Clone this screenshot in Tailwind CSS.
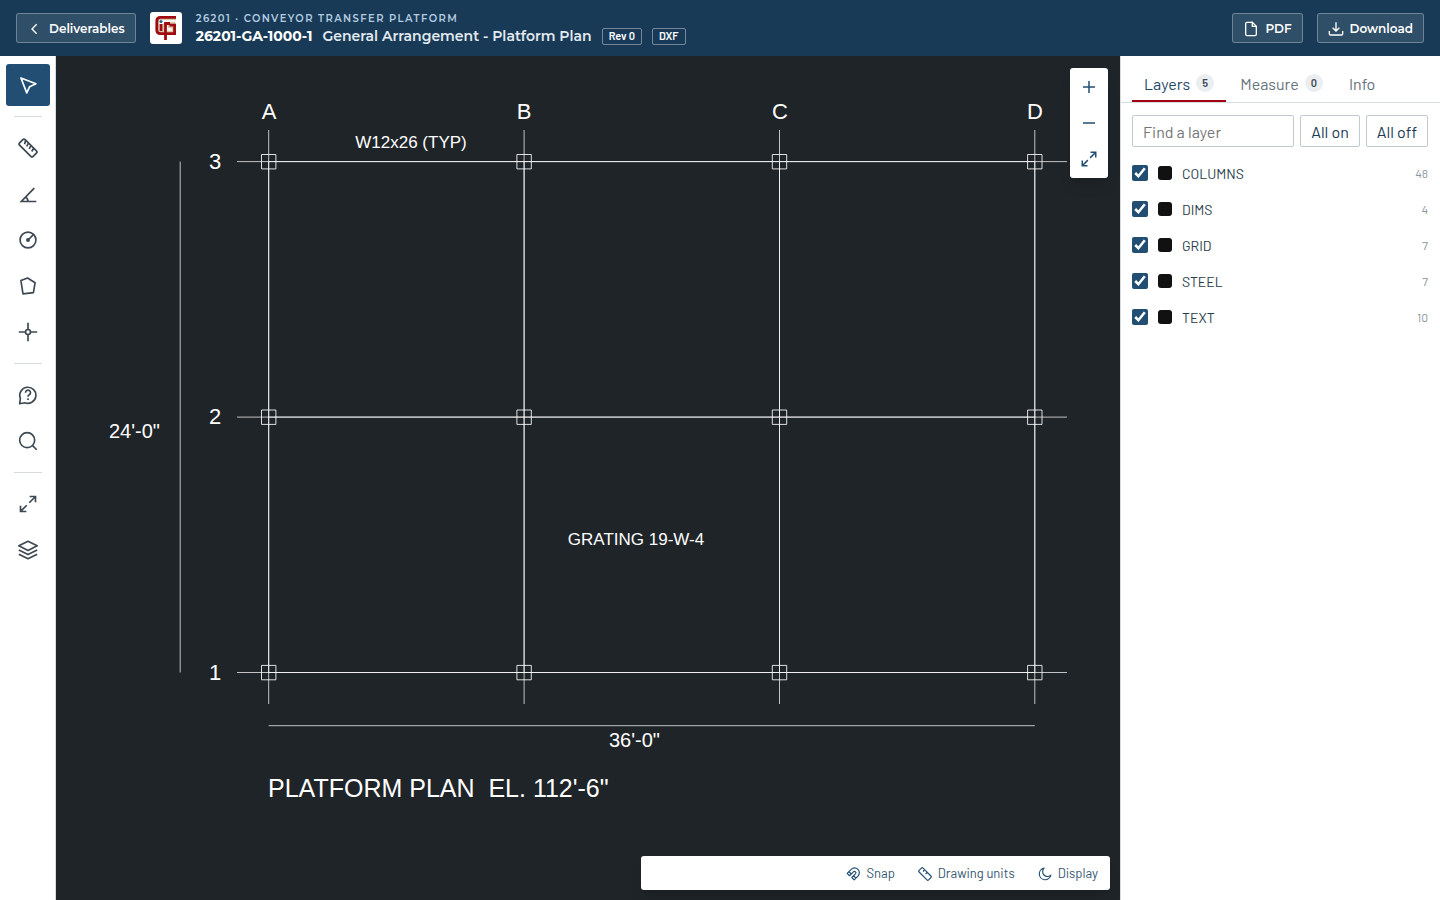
<!DOCTYPE html>
<html lang="en">
<head>
<meta charset="utf-8">
<meta name="viewport" content="width=device-width, initial-scale=1">
<title>26201-GA-1000-1 General Arrangement - Platform Plan</title>
<script src="https://cdn.jsdelivr.net/npm/@tailwindcss/browser@4"></script>
</head>
<body class="flex h-screen flex-col overflow-hidden bg-white font-['Barlow','Roboto',sans-serif] text-[#1a3a55]">
<svg class="hidden" aria-hidden="true">
  <symbol id="expand" viewBox="0 0 24 24"><path d="M14 3h7v7M21 3l-7.500 7.500M10 21H3v-7M3 21l7.500-7.500"/></symbol>
</svg>

<header class="flex h-14 shrink-0 items-center gap-3.5 bg-[#183a56] px-4 font-['Montserrat','Inter',sans-serif] text-white">
  <a href="#" class="flex h-[30px] items-center gap-1.5 rounded-[3px] border border-white/30 bg-white/10 px-2.5 pt-px text-[12px] font-semibold">
    <svg class="size-4 fill-none stroke-current stroke-2" viewBox="0 0 24 24"><path d="m14.500 5-7 7 7 7"/></svg>
    Deliverables
  </a>
  <svg class="size-8 shrink-0" viewBox="0 0 32 32" role="img" aria-label="Company logo">
    <rect width="32" height="32" rx="3" fill="#fff"/>
    <path d="M26 7H10Q8 7 8 9.500V18Q8 20 10 20H23V15H19V11H25.500M13 12V19" fill="none" stroke="#d6c9ac" stroke-width="2.500"/>
    <path d="M26 5.300H10.500Q6.800 5.300 6.800 9V18.200Q6.800 21.600 10.500 21.600H24.600V13.200H19.500M11 12V19M15.500 28V11.500H20" fill="none" stroke="#a00a10" stroke-width="2.800"/>
    <circle cx="11" cy="9.500" r="1.500" fill="#1f5d91"/>
  </svg>
  <div class="min-w-0 flex-1 pt-0.5">
    <div class="text-[10px] leading-[14px] font-semibold tracking-[0.14em] text-[#b3cbe0]">26201 · CONVEYOR TRANSFER PLATFORM</div>
    <div class="flex items-center gap-2.5 leading-5 whitespace-nowrap">
      <span class="text-[14px] font-bold">26201-GA-1000-1</span>
      <h1 class="text-[14px] font-semibold text-[#e3eaf0]">General Arrangement - Platform Plan</h1>
      <span class="flex h-[17px] items-center rounded-[2px] border border-white/40 px-1.5 font-['Barlow','Roboto',sans-serif] text-[11px] font-semibold">Rev 0</span>
      <span class="flex h-[17px] items-center rounded-[2px] border border-white/40 px-1.5 font-['Barlow','Roboto',sans-serif] text-[11px] font-semibold">DXF</span>
    </div>
  </div>
  <button class="flex h-[30px] items-center gap-1.5 rounded-[3px] border border-white/30 bg-white/10 px-2.5 pt-px text-[12px] font-semibold">
    <svg class="size-4 fill-none stroke-current stroke-2" viewBox="0 0 24 24"><path d="M14 2H6a2 2 0 0 0-2 2v16a2 2 0 0 0 2 2h12a2 2 0 0 0 2-2V8l-6-6v6h6"/></svg>
    PDF
  </button>
  <button class="flex h-[30px] items-center gap-1.5 rounded-[3px] border border-white/30 bg-white/10 px-2.5 pt-px text-[12px] font-semibold">
    <svg class="size-4 fill-none stroke-current stroke-2" viewBox="0 0 24 24"><path d="M12 2v13m-5-5 5 5 5-5M2 15v4a2 2 0 0 0 2 2h16a2 2 0 0 0 2-2v-4"/></svg>
    Download
  </button>
</header>

<div class="flex min-h-0 flex-1">
  <nav aria-label="Tools" class="flex w-14 shrink-0 flex-col items-center gap-1 border-r border-[#d5dce2] bg-white py-2 text-[#3d4852]">
    <button aria-label="Select" class="grid h-[42px] w-11 place-items-center rounded-[3px] bg-[#214e72] text-white"><svg class="size-5 fill-none stroke-current stroke-2" stroke-linejoin="round" viewBox="0 0 24 24"><path d="m3.500 3.500 18 7-7.500 3.500L10.500 21.500Z"/></svg></button>
    <hr class="my-1.5 w-7 border-[#d5dce2]">
    <button aria-label="Measure distance" class="grid h-[42px] w-11 place-items-center"><svg class="size-5 fill-none stroke-current stroke-2" stroke-linejoin="round" viewBox="0 0 24 24"><path d="M1.900 8.600a2 2 0 0 1 0-2.800l3.900-3.900a2 2 0 0 1 2.800 0l13.500 13.500a2 2 0 0 1 0 2.800l-3.900 3.900a2 2 0 0 1-2.800 0ZM9 3l-1 4.500M12.500 5.800l-2 4.400M15.500 8.900l-2 4.300M18.800 12l-2.300 4.200"/></svg></button>
    <button aria-label="Measure angle" class="grid h-[42px] w-11 place-items-center"><svg class="size-5 fill-none stroke-current stroke-2" viewBox="0 0 24 24"><path d="M19.500 5 4 21h18M9 16q3 1.500 3 5"/></svg></button>
    <button aria-label="Measure radius" class="grid h-[42px] w-11 place-items-center"><svg class="size-5 fill-none stroke-current stroke-2" viewBox="0 0 24 24"><circle cx="12" cy="12" r="9.500"/><path d="m12 12 6.500-6.500"/><circle cx="12" cy="12" r="1.400" fill="currentColor"/></svg></button>
    <button aria-label="Measure area" class="grid h-[42px] w-11 place-items-center"><svg class="size-5 fill-none stroke-current stroke-2" stroke-linejoin="round" viewBox="0 0 24 24"><path d="m3.500 5.500 8-3 9 5.500-2 12L6 21.500Z"/></svg></button>
    <button aria-label="Point coordinates" class="grid h-[42px] w-11 place-items-center"><svg class="size-5 fill-none stroke-current stroke-2" viewBox="0 0 24 24"><circle cx="12" cy="12" r="3"/><path d="M12 1v8M12 15v8M1 12h8M15 12h8"/></svg></button>
    <hr class="my-1.5 w-7 border-[#d5dce2]">
    <button aria-label="Ask a question" class="grid h-[42px] w-11 place-items-center"><svg class="size-5 fill-none stroke-current stroke-2" stroke-linejoin="round" viewBox="0 0 24 24"><path d="M2 22.500 2.800 16A9.700 9.700 0 1 1 8 21.300ZM9 9.200a3 3 0 1 1 4.500 2.600q-1.500.800-1.500 2.200M12 16v2"/></svg></button>
    <button aria-label="Search" class="grid h-[42px] w-11 place-items-center"><svg class="size-5 fill-none stroke-current stroke-2" viewBox="0 0 24 24"><circle cx="11" cy="11" r="9"/><path d="m17.500 17.500 5 5"/></svg></button>
    <hr class="my-1.5 w-7 border-[#d5dce2]">
    <button aria-label="Zoom to fit" class="grid h-[42px] w-11 place-items-center"><svg class="size-5 fill-none stroke-current stroke-2"><use href="#expand"/></svg></button>
    <button aria-label="Layers" class="grid h-[42px] w-11 place-items-center"><svg class="size-5 fill-none stroke-current stroke-2" stroke-linejoin="round" viewBox="0 0 24 24"><path d="m12 1.500 11 5.500-11 5.500L1 7ZM1 12l11 5.500L23 12M1 17l11 5.500L23 17"/></svg></button>
  </nav>

  <main class="relative min-w-0 flex-1 bg-[#1f2428]">
    <svg class="block size-full fill-none stroke-white" viewBox="56 56 1064 844" role="img" aria-label="Platform plan drawing">
      <g stroke-opacity=".72">
        <path d="M268.700 130V704M524.100 130V704M779.500 130V704M1034.800 130V704M237 161.600H1067M237 417.100H1067M237 672.500H1067"/>
        <path d="M180.200 161.600V672.500M268.700 725.700H1034.800"/>
      </g>
      <path stroke-opacity=".75" d="M268.700 161.600V672.500M524.100 161.600V672.500M779.500 161.600V672.500M1034.800 161.600V672.500M268.700 161.600H1034.800M268.700 417.100H1034.800M268.700 672.500H1034.800"/>
      <path stroke-opacity=".85" d="M261.500 154.500h14.400v14.400h-14.400zM516.900 154.500h14.400v14.400h-14.400zM772.300 154.500h14.400v14.400h-14.400zM1027.600 154.500h14.400v14.400h-14.400zM261.500 410h14.400v14.400h-14.400zM516.900 410h14.400v14.400h-14.400zM772.300 410h14.400v14.400h-14.400zM1027.600 410h14.400v14.400h-14.400zM261.500 665.400h14.400v14.400h-14.400zM516.900 665.400h14.400v14.400h-14.400zM772.300 665.400h14.400v14.400h-14.400zM1027.600 665.400h14.400v14.400h-14.400z"/>
      <g class="fill-white stroke-none font-['Liberation_Sans',sans-serif] text-[22px]">
        <g text-anchor="middle">
          <text x="269" y="119">A</text><text x="524" y="119">B</text><text x="780" y="119">C</text><text x="1035" y="119">D</text>
          <text x="215" y="169">3</text><text x="215" y="424">2</text><text x="215" y="680">1</text>
        </g>
        <text class="text-[17px]" text-anchor="middle" x="411" y="148">W12x26 (TYP)</text>
        <text class="text-[17px]" text-anchor="middle" x="636" y="545">GRATING 19-W-4</text>
        <text class="text-[20px]" x="109" y="438">24'-0"</text>
        <text class="text-[20px]" x="609" y="747">36'-0"</text>
        <text class="text-[25px] whitespace-pre" x="268" y="797">PLATFORM PLAN  EL. 112'-6"</text>
      </g>
    </svg>
    <div class="absolute top-3 right-3 flex w-[38px] flex-col rounded-[3px] bg-white py-px text-[#214e72] shadow-lg">
      <button aria-label="Zoom in" class="grid h-9 place-items-center"><svg class="size-[18px] fill-none stroke-current stroke-2" viewBox="0 0 24 24"><path d="M12 4v16M4 12h16"/></svg></button>
      <button aria-label="Zoom out" class="grid h-9 place-items-center"><svg class="size-[18px] fill-none stroke-current stroke-2" viewBox="0 0 24 24"><path d="M4 12h16"/></svg></button>
      <button aria-label="Fit drawing" class="grid h-9 place-items-center"><svg class="size-[18px] fill-none stroke-current stroke-2"><use href="#expand"/></svg></button>
    </div>
    <div class="absolute right-2.5 bottom-2.5 flex h-[34px] w-[469px] items-center justify-end gap-[23px] rounded-[3px] bg-white px-3 pt-px text-[13px] text-[#35566f] shadow-lg">
      <button class="flex items-center gap-1.5"><svg class="size-3.5 fill-none stroke-[#214e72] stroke-2" stroke-linejoin="round" viewBox="0 0 24 24"><path d="m2 11 7-7a8 8 0 0 1 11.500 11.500L14 22l-4-4 6.500-6.500a2.500 2.500 0 0 0-3.500-3.500L6 15ZM5 8l4 4M13 15l4 4"/></svg>Snap</button>
      <button class="flex items-center gap-1.5"><svg class="size-3.5 fill-none stroke-[#214e72] stroke-2" stroke-linejoin="round" viewBox="0 0 24 24"><path d="M1.900 8.600a2 2 0 0 1 0-2.800l3.900-3.900a2 2 0 0 1 2.800 0l13.500 13.500a2 2 0 0 1 0 2.800l-3.900 3.900a2 2 0 0 1-2.800 0ZM11 4l-2 4M16 9l-3 3"/></svg>Drawing units</button>
      <button class="flex items-center gap-1.5"><svg class="size-3.5 fill-none stroke-[#214e72] stroke-2" stroke-linejoin="round" viewBox="0 0 24 24"><path d="M10.500 2a10 10 0 1 0 11.500 12a7 7 0 1 1-11.500-12Z"/></svg>Display</button>
    </div>
  </main>

  <aside class="flex w-80 shrink-0 flex-col border-l border-[#d5dce2] bg-white">
    <div role="tablist" class="flex h-[47px] items-end border-b border-[#d5dce2] pl-[11px] text-[16px] text-[#65727d]">
      <button role="tab" aria-selected="true" class="flex h-9 items-center gap-1.5 border-b-2 border-[#a00012] px-3 text-[#1f4666]"><span class="pt-0.5">Layers</span> <span class="grid size-[18px] place-items-center rounded-full bg-[#eaeef1] text-[11px] font-semibold text-[#3d4852]">5</span></button>
      <button role="tab" aria-selected="false" class="flex h-9 items-center gap-1.5 border-b-2 border-transparent pr-3 pl-3.5"><span class="pt-0.5">Measure</span> <span class="grid size-[18px] place-items-center rounded-full bg-[#eaeef1] text-[11px] font-semibold text-[#3d4852]">0</span></button>
      <button role="tab" aria-selected="false" class="flex h-9 items-center border-b-2 border-transparent px-3.5"><span class="pt-0.5">Info</span></button>
    </div>
    <div class="flex gap-1.5 pt-3 pr-3 pb-2 pl-[11px] text-[16px]">
      <input aria-label="Find a layer" placeholder="Find a layer" class="h-8 min-w-0 flex-1 rounded-[2px] border border-[#c1cad2] px-2.5 placeholder:text-[#757575]">
      <button class="h-8 w-[60px] rounded-[2px] border border-[#c1cad2] pt-0.5 whitespace-nowrap">All on</button>
      <button class="h-8 w-[62px] rounded-[2px] border border-[#c1cad2] pt-0.5 whitespace-nowrap">All off</button>
    </div>
    <ul class="pr-3 pl-[11px] text-[14px] text-[#2a3b49]">
      <li><label class="flex h-9 items-center gap-2.5"><input type="checkbox" checked class="size-4 accent-[#214e72]"><span class="size-3.5 rounded-[3px] bg-[#111]"></span><span class="flex-1">COLUMNS</span><span class="text-[12px] text-[#8c969e]">48</span></label></li>
      <li><label class="flex h-9 items-center gap-2.5"><input type="checkbox" checked class="size-4 accent-[#214e72]"><span class="size-3.5 rounded-[3px] bg-[#111]"></span><span class="flex-1">DIMS</span><span class="text-[12px] text-[#8c969e]">4</span></label></li>
      <li><label class="flex h-9 items-center gap-2.5"><input type="checkbox" checked class="size-4 accent-[#214e72]"><span class="size-3.5 rounded-[3px] bg-[#111]"></span><span class="flex-1">GRID</span><span class="text-[12px] text-[#8c969e]">7</span></label></li>
      <li><label class="flex h-9 items-center gap-2.5"><input type="checkbox" checked class="size-4 accent-[#214e72]"><span class="size-3.5 rounded-[3px] bg-[#111]"></span><span class="flex-1">STEEL</span><span class="text-[12px] text-[#8c969e]">7</span></label></li>
      <li><label class="flex h-9 items-center gap-2.5"><input type="checkbox" checked class="size-4 accent-[#214e72]"><span class="size-3.5 rounded-[3px] bg-[#111]"></span><span class="flex-1">TEXT</span><span class="text-[12px] text-[#8c969e]">10</span></label></li>
    </ul>
  </aside>
</div>
</body>
</html>
